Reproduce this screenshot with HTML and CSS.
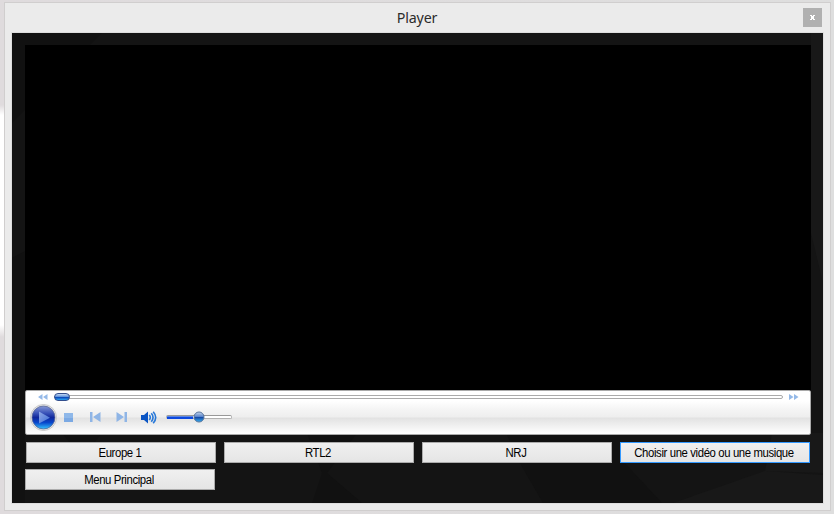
FILE: index.html
```html
<!DOCTYPE html>
<html lang="fr">
<head>
<meta charset="utf-8">
<title>Player</title>
<link rel="stylesheet" href="styles.css">
</head>
<body>
<main class="window">
  <header class="titlebar">
    <h1 class="title">Player</h1>
    <button class="close" aria-label="Fermer"><svg width="5" height="5" viewBox="0 0 5 5" shape-rendering="crispEdges"><path fill="#fff" d="M0 0h2v1H0zM3 0h2v1H3zM1 1h3v1H1zM1 2h3v1H1zM1 3h3v1H1zM0 4h2v1H0zM3 4h2v1H3z"/></svg></button>
  </header>
  <section class="client">
    <svg class="facets" viewBox="0 0 811 470" aria-hidden="true">
      <path fill="#111" d="M0 0H90L0 90zM0 225L13 218V470H0zM505 425L495 402H608V425L650 470H531z"/>
      <path fill="#181818" d="M753 438L811 442V470H661zM799 0h12v250l-12-50zM760 400h51v40l-58-2z"/>
      <path fill="#111" d="M50 400h40l-20 25zM295 400h50l-30 40 35 30h-50l10-30z"/>
    </svg>
    <div class="video"></div>
    <div class="controls">
      <div class="seek">
        <svg width="10" height="6" viewBox="0 0 10 6" fill="#94b9e8"><path d="M0 3L4.500 0V6zM5 3L9.500 0V6z"/></svg>
        <div class="seek-track"><span class="seek-thumb"></span></div>
        <svg width="10" height="6" viewBox="0 0 10 6" fill="#94b9e8"><path d="M0 0L4.500 3L0 6zM5 0L9.500 3L5 6z"/></svg>
      </div>
      <div class="transport">
        <svg class="play" width="28" height="28" viewBox="0 0 28 28">
          <defs>
            <linearGradient id="ball" x2="0" y2="1"><stop offset="0" stop-color="#8799d5"/><stop offset=".3" stop-color="#3c55ba"/><stop offset=".5" stop-color="#10279b"/><stop offset=".72" stop-color="#0746cc"/><stop offset="1" stop-color="#35c5ff"/></linearGradient>
            <linearGradient id="arrow" x2="1" y2="1"><stop stop-color="#91a9e6"/><stop offset="1" stop-color="#3c6cd5"/></linearGradient>
            <linearGradient id="bead" x2="0" y2="1"><stop offset="0" stop-color="#c8d8ee"/><stop offset=".45" stop-color="#5b86cc"/><stop offset=".5" stop-color="#123f9e"/><stop offset="1" stop-color="#37b4f5"/></linearGradient>
          </defs>
          <circle cx="14.500" cy="14.500" r="13" fill="#ededed" stroke="#bcbcbc" stroke-width=".8"/>
          <circle cx="14.500" cy="14.500" r="11.500" fill="url(#ball)" stroke="#5c6894" stroke-width=".8"/>
          <path d="M10 8.500L21 14.700L10 20.500z" fill="url(#arrow)"/>
        </svg>
        <svg class="stop" width="9" height="9"><rect width="9" height="9" fill="#8fb8e9"/><rect y="5" width="9" height="4" fill="#7ba9e3"/></svg>
        <svg class="prev" width="11" height="10" viewBox="0 0 11 10" fill="#8fb5e6"><path d="M0 0h2.500v10H0zM10.500 0v10L3 5z"/></svg>
        <svg class="next" width="11" height="10" viewBox="0 0 11 10" fill="#8fb5e6"><path d="M8.500 0H11v10H8.500zM.5 0v10L8 5z"/></svg>
        <svg class="sound" width="16" height="13" viewBox="0 0 16 13"><path fill="#0b55c4" d="M0 4h3L7 .5v12L3 9H0z"/><path fill="none" stroke="#2878d8" stroke-width="1.600" d="M8.300 4q2 2.500 0 5M10.300 2.300q3.500 4.200 0 8.400M12.200.8q5 5.700 0 11.400"/></svg>
        <div class="volume"><span class="level"></span><svg class="knob" width="12" height="12" viewBox="0 0 12 12"><circle cx="6" cy="6" r="5" fill="url(#bead)" stroke="#56749d"/></svg></div>
      </div>
    </div>
    <nav class="buttons">
      <button class="btn"><span>Europe 1</span></button>
      <button class="btn"><span>RTL2</span></button>
      <button class="btn"><span>NRJ</span></button>
      <button class="btn focused"><span>Choisir une vidéo ou une musique</span></button>
      <button class="btn menu"><span>Menu Principal</span></button>
    </nav>
  </section>
</main>
</body>
</html>
```
FILE: styles.css
```css
* { box-sizing: border-box; }
body {
  margin: 0;
  height: 514px;
  padding: 2px 3px 3px 4px;
  overflow: hidden;
  background:
    linear-gradient(#dfdbdd00, #fff 10px, #fff 220px, #dfdbdd00) 0 105px / 4px 232px no-repeat,
    linear-gradient(90deg, #dfdbdd, #dedede);
}
.window {
  width: 827px;
  height: 509px;
  border: 1px solid #d0cece;
  background: #ebebeb;
  padding: 0 6px;
}
.titlebar {
  height: 29px;
  display: grid;
  grid-template-columns: 1fr 19px;
  padding: 5px 2px 0 0;
}
.title {
  margin: 0 0 0 20px;
  font: 400 15px/18px "Noto Sans", sans-serif;
  letter-spacing: -.2px;
  transform: scaleX(.95);
  text-align: center;
  color: #2b2b2b;
}
.close {
  width: 19px;
  height: 19px;
  padding: 0;
  border: 0;
  background: #b0b0b0;
  display: flex;
  align-items: center;
  justify-content: center;
}
.client {
  position: relative;
  width: 813px;
  height: 472px;
  border: 1px solid #dedede;
  background: #141414;
  padding: 12px 12px 0 13px;
}
.facets { position: absolute; inset: 0; width: 811px; height: 470px; }
.video { position: relative; height: 345px; background: #000; }
.controls {
  position: relative;
  height: 45px;
  border: 1px solid #aaa;
  border-radius: 2px;
  background: linear-gradient(#fff 0, #fff 10px, #f5f5f5 18px, #eee 26px, #e2e2e2 27px, #fff 43px);
}
.seek { height: 12px; padding: 0 11px 0 12px; display: flex; align-items: center; }
.seek-track {
  width: 729px;
  height: 4px;
  margin: 0 6px 0 6px;
  border: 1px solid #aaa;
  border-radius: 2px;
  background: #fff;
  display: flex;
  align-items: center;
}
.seek-thumb {
  flex: none;
  width: 16px;
  height: 8px;
  margin-left: -1px;
  border: 1px solid #334f8d;
  border-radius: 4px;
  background: linear-gradient(#c3d8f4, #6798dc 42%, #053bb3 50%, #2ba5f2);
}
.transport { height: 28px; padding-left: 3px; display: flex; align-items: center; }
.transport > * { flex: none; }
.stop { margin-left: 7px; }
.prev { margin-left: 17px; }
.next { margin-left: 15px; }
.sound { margin-left: 14px; }
.volume {
  width: 66px;
  height: 4px;
  margin-left: 9px;
  border: 1px solid #b0b0b0;
  border-top-color: #999;
  border-radius: 2px;
  background: #fff;
  display: flex;
  align-items: center;
}
.level { width: 26px; height: 3px; background: linear-gradient(#8aa9df, #0b48e0 50%); }
.knob { flex: none; }
.buttons {
  position: relative;
  display: grid;
  grid-template-columns: repeat(4, 190px);
  gap: 6px 8px;
  padding: 7px 0 0 1px;
}
.btn {
  height: 21px;
  padding: 1px 2px 0 0;
  border: 1px solid #acacac;
  background: linear-gradient(#f0f0f0, #e5e5e5);
  color: #000;
  font: 12px/18px "Liberation Sans", Arial, sans-serif;
  letter-spacing: -.4px;
  white-space: nowrap;
}
.btn span { display: block; transform: scaleX(.945); }
.focused { border-color: #3399ff; }
.menu { margin: 0 1px 0 -1px; }
```
